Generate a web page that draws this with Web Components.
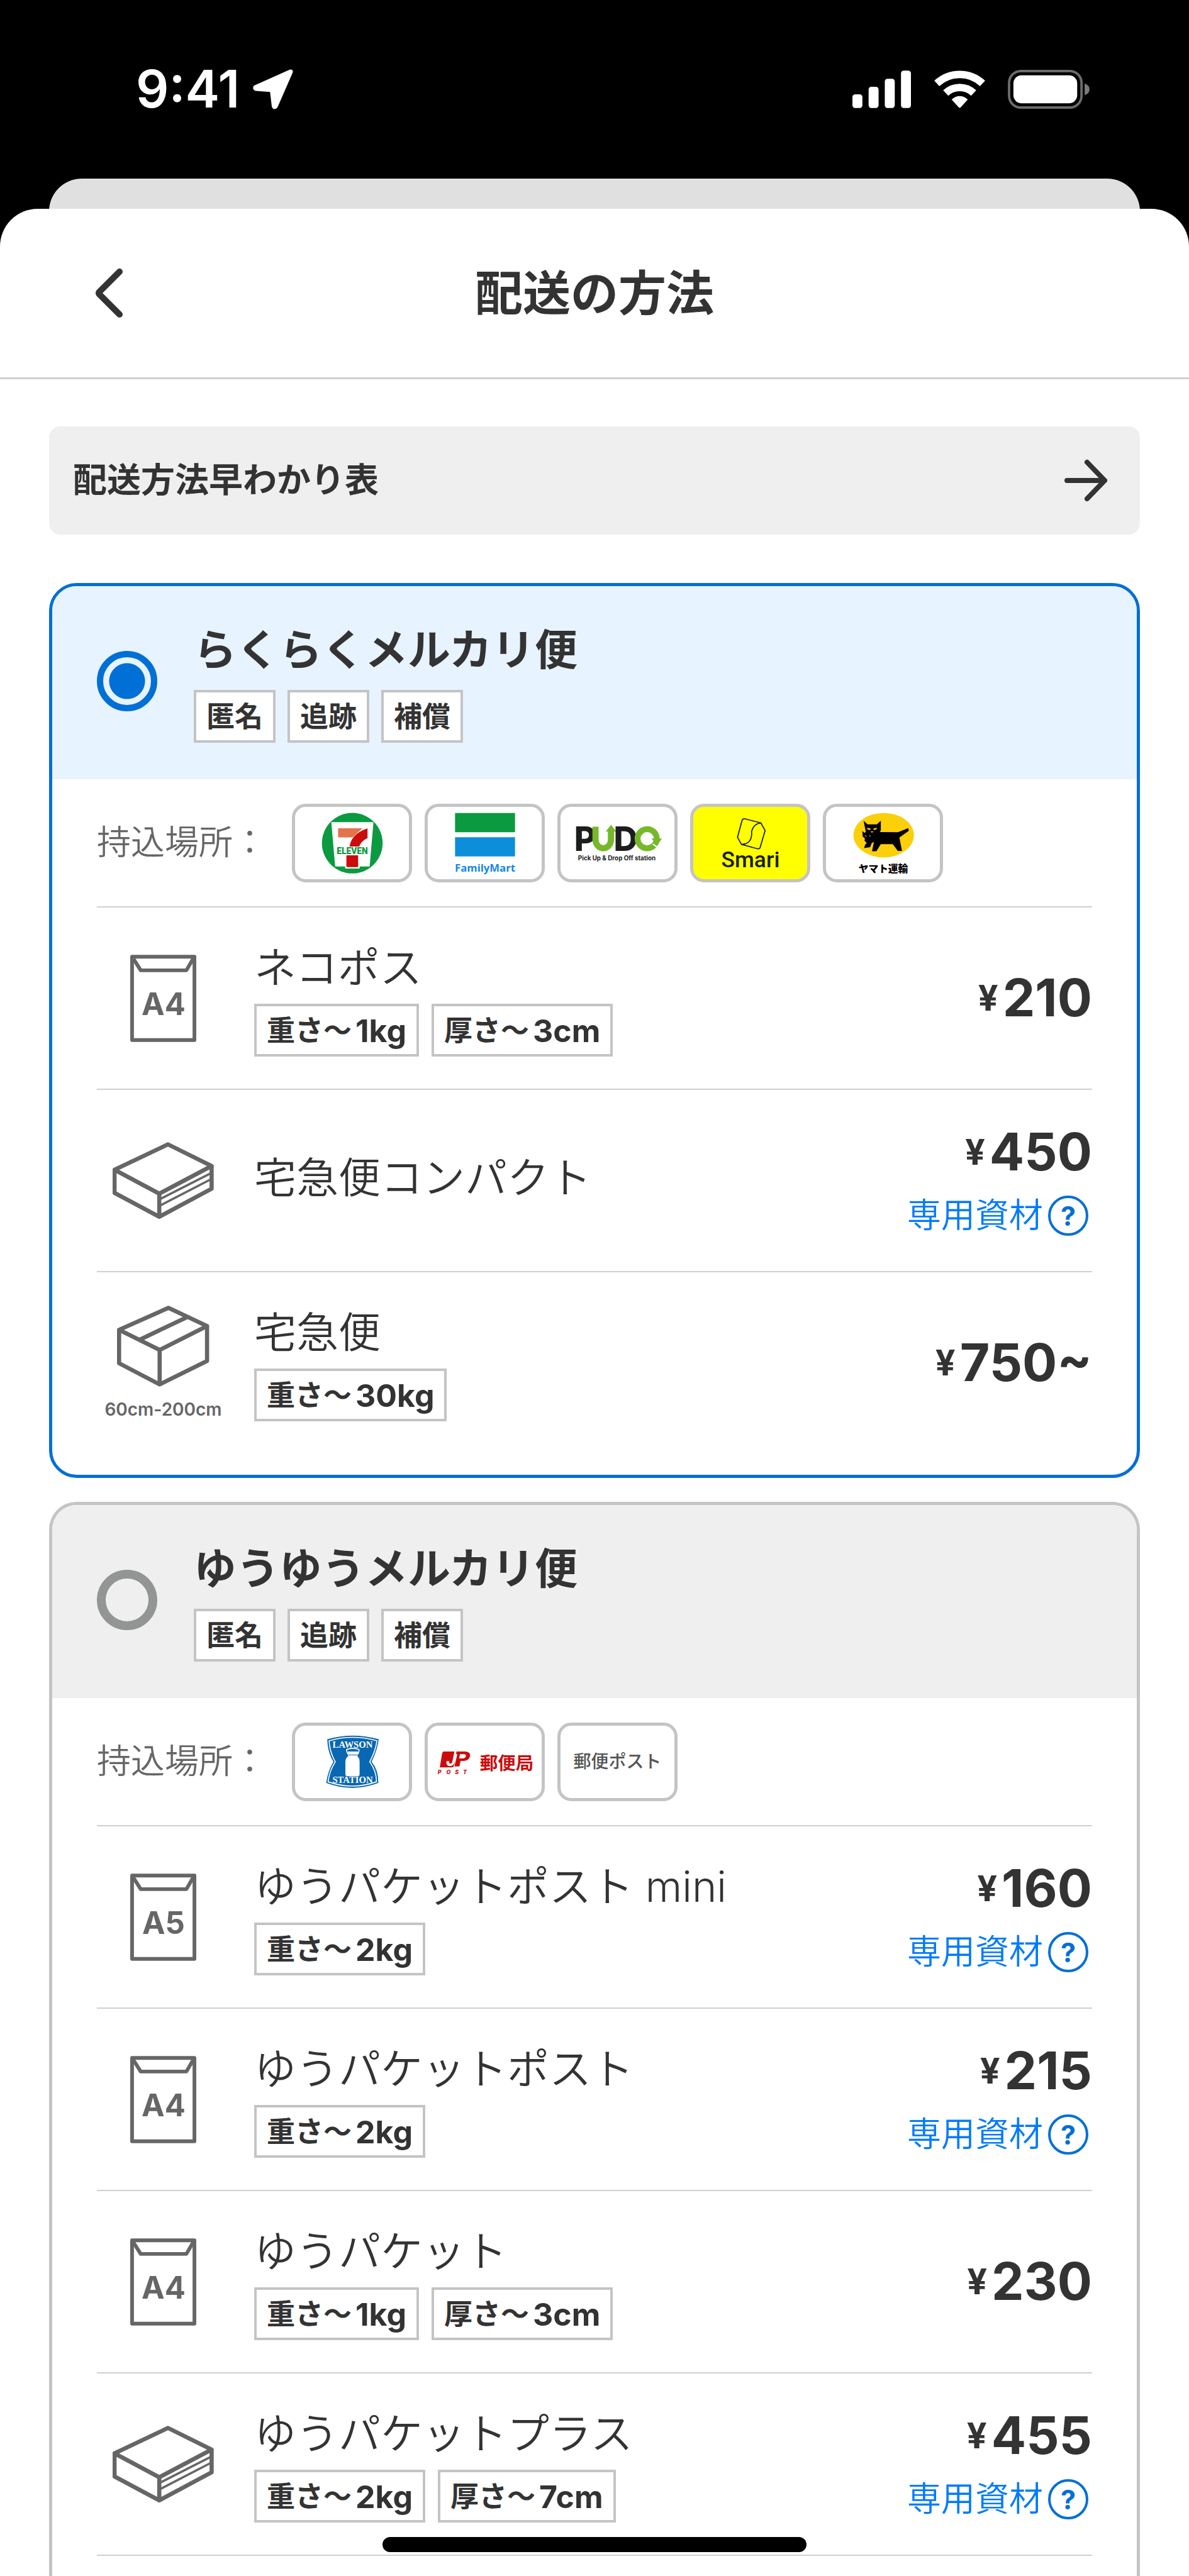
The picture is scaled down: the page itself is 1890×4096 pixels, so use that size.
<!DOCTYPE html>
<html lang="ja">
<head>
<meta charset="utf-8">
<meta name="viewport" content="width=device-width, initial-scale=1">
<title>配送の方法</title>
<style>
  html, body { margin: 0; }
  body {
    min-height: 100vh;
    display: flex;
    flex-direction: column;
    background: #000;
    color: #333;
    font-family: Inter, "Noto Sans CJK JP", sans-serif;
    --line: #c4c4c4;
    --blue: #006fd6;
  }
  shipping-sheet { flex: 1; }
</style>
</head>
<body>
<status-bar time="9:41"></status-bar>
<shipping-sheet heading="配送の方法">
  <guide-link>配送方法早わかり表</guide-link>

  <shipping-card heading="らくらくメルカリ便" selected>
    <tag-label slot="tags">匿名</tag-label>
    <tag-label slot="tags">追跡</tag-label>
    <tag-label slot="tags">補償</tag-label>
    <place-chip slot="places" logo="seven"></place-chip>
    <place-chip slot="places" logo="family"></place-chip>
    <place-chip slot="places" logo="pudo"></place-chip>
    <place-chip slot="places" logo="smari"></place-chip>
    <place-chip slot="places" logo="yamato"></place-chip>
    <shipping-option name="ネコポス" icon="envelope" size="A4" price="210">
      <tag-label>重さ〜<b>1kg</b></tag-label>
      <tag-label>厚さ〜<b>3cm</b></tag-label>
    </shipping-option>
    <shipping-option name="宅急便コンパクト" icon="flat" price="450" material></shipping-option>
    <shipping-option name="宅急便" icon="box" size="60cm-200cm" price="750~">
      <tag-label>重さ〜<b>30kg</b></tag-label>
    </shipping-option>
  </shipping-card>

  <shipping-card heading="ゆうゆうメルカリ便" continues>
    <tag-label slot="tags">匿名</tag-label>
    <tag-label slot="tags">追跡</tag-label>
    <tag-label slot="tags">補償</tag-label>
    <place-chip slot="places" logo="lawson"></place-chip>
    <place-chip slot="places" logo="post"></place-chip>
    <place-chip slot="places">郵便ポスト</place-chip>
    <shipping-option name="ゆうパケットポスト mini" icon="envelope" size="A5" price="160" material>
      <tag-label>重さ〜<b>2kg</b></tag-label>
    </shipping-option>
    <shipping-option name="ゆうパケットポスト" icon="envelope" size="A4" price="215" material>
      <tag-label>重さ〜<b>2kg</b></tag-label>
    </shipping-option>
    <shipping-option name="ゆうパケット" icon="envelope" size="A4" price="230">
      <tag-label>重さ〜<b>1kg</b></tag-label>
      <tag-label>厚さ〜<b>3cm</b></tag-label>
    </shipping-option>
    <shipping-option name="ゆうパケットプラス" icon="flat" price="455" material>
      <tag-label>重さ〜<b>2kg</b></tag-label>
      <tag-label>厚さ〜<b>7cm</b></tag-label>
    </shipping-option>
  </shipping-card>
</shipping-sheet>
<home-indicator></home-indicator>

<script>
class BaseElement extends HTMLElement {
  connectedCallback() {
    if (this.shadowRoot) return;
    this.attachShadow({ mode: 'open' }).innerHTML = this.render();
  }
  attr(name) { return this.getAttribute(name) || ''; }
}

customElements.define('status-bar', class extends BaseElement {
  render() {
    return `<style>
      :host { display: flex; align-items: center; justify-content: space-between; height: 284px; padding: 0 158px 0 216px; box-sizing: border-box; color: #fff; }
      .left, .right { display: flex; align-items: center; }
      .left { gap: 20px; } .right { gap: 36px; }
      time { font-size: 82px; line-height: 80px; font-weight: 600; }
      svg { display: block; }
    </style>
    <div class="left">
      <time>${this.attr('time')}</time>
      <svg width="66" height="66" viewBox="0 0 65 65" aria-hidden="true"><path d="M60 5 L5 29.500 Q4 31 6 31.500 L31 33.500 L34 59 Q35 61 36.500 59 Z" fill="#fff" stroke="#fff" stroke-width="7" stroke-linejoin="round"/></svg>
    </div>
    <div class="right">
      <svg width="94" height="60" viewBox="0 0 95 60" aria-hidden="true" fill="#fff"><rect y="38" width="16" height="22" rx="4.500"/><rect x="26" y="26" width="16" height="34" rx="4.500"/><rect x="52" y="13" width="16" height="47" rx="4.500"/><rect x="78" width="16" height="60" rx="4.500"/></svg>
      <svg width="81" height="60" viewBox="0 0 82 60" aria-hidden="true" fill="none" stroke="#fff" stroke-width="12"><path d="M4.200 20.500 A54 54 0 0 1 77.800 20.500"/><path d="M18.500 35.900 A33 33 0 0 1 63.500 35.900"/><path d="M28 46.500 Q41 35.500 54 46.500 L42.500 59 Q41 60.500 39.500 59 Z" fill="#fff" stroke="none"/></svg>
      <svg width="130" height="62" viewBox="0 0 132 63" aria-hidden="true"><rect x="2" y="2" width="117" height="59" rx="19" fill="none" stroke="#6b6b6b" stroke-width="4"/><rect x="9" y="9" width="103" height="45" rx="13" fill="#fff"/><path d="M124 22 Q132 25 132 31.500 Q132 38 124 41 Z" fill="#7a7a7a"/></svg>
    </div>`;
  }
});

customElements.define('shipping-sheet', class extends BaseElement {
  render() {
    return `<style>
      :host { display: flex; flex-direction: column; }
      .behind { height: 80px; margin: 0 78px -32px; border-radius: 52px 52px 0 0; background: #e0e0e0; }
      .sheet { flex: 1; display: flex; flex-direction: column; background: #fff; border-radius: 60px 60px 0 0; }
      header { display: grid; grid-template-columns: 1fr auto 1fr; align-items: center; height: 268px; padding: 0 148px; border-bottom: 3px solid #d0d0d0; }
      h1 { margin: 0; font-size: 76px; line-height: 90px; font-weight: 700; }
      button { justify-self: start; display: block; padding: 0; border: 0; background: none; color: inherit; }
      svg { display: block; }
      main { flex: 1; display: flex; flex-direction: column; padding: 75px 78px 0; }
      ::slotted(shipping-card) { margin-top: 38px; }
      ::slotted(guide-link) { margin-bottom: 39px; }
      ::slotted(shipping-card[continues]) { flex: 1; }
    </style>
    <div class="behind"></div>
    <div class="sheet">
      <header>
        <button type="button" aria-label="戻る"><svg width="52" height="86" viewBox="0 0 52 86"><path d="M42 9 L9.500 41.500 Q8.500 43 9.500 44.500 L42 77" fill="none" stroke="#333" stroke-width="10" stroke-linecap="round" stroke-linejoin="round"/></svg></button>
        <h1>${this.attr('heading')}</h1>
      </header>
      <main><slot></slot></main>
    </div>`;
  }
});

customElements.define('guide-link', class extends BaseElement {
  render() {
    return `<style>
      :host { display: block; }
      a { display: flex; align-items: center; justify-content: space-between; height: 172px; padding: 0 50px 0 38px; border-radius: 18px; background: #efefef; color: #333; text-decoration: none; font-size: 54px; line-height: 64px; font-weight: 700; }
      svg { display: block; }
    </style>
    <a href="#guide"><span><slot></slot></span>
      <svg width="72" height="72" viewBox="0 0 72 72" aria-hidden="true"><path d="M6 36 H66 M38 7 L66 36 L38 65" fill="none" stroke="#333" stroke-width="8" stroke-linecap="round" stroke-linejoin="round"/></svg>
    </a>`;
  }
});

customElements.define('tag-label', class extends BaseElement {
  render() {
    return `<style>
      :host { display: flex; align-items: center; gap: 6px; height: 84px; box-sizing: border-box; padding: 2px 16px 0; border: 4px solid var(--line); background: #fff; font-size: 45px; line-height: 54px; font-weight: 700; white-space: nowrap; }
      ::slotted(b) { font-size: 50px; font-weight: 700; }
    </style><slot></slot>`;
  }
});

customElements.define('shipping-card', class extends BaseElement {
  render() {
    return `<style>
      :host { display: flex; flex-direction: column; overflow: hidden; box-sizing: border-box; border: 5px solid var(--line); border-radius: 44px; --head: #efefef; }
      :host([selected]) { border-color: var(--blue); --head: #e7f3ff; }
      :host([continues]) { border-bottom: 0; border-radius: 44px 44px 0 0; }
      header { display: flex; align-items: center; gap: 58px; padding: 58px 71px; background: var(--head); }
      input { appearance: none; flex: none; width: 96px; height: 96px; margin: 0 0 5px; border: 14px solid #929594; border-radius: 50%; }
      input:checked { border: 10px solid var(--blue); background: radial-gradient(circle, var(--blue) 28px, transparent 29px); }
      .title { padding-top: 5px; }
      label { display: block; font-size: 68px; line-height: 76px; font-weight: 700; }
      .tags { display: flex; gap: 19px; margin-top: 26px; }
      .places { display: flex; align-items: center; height: 202px; padding: 0 71px; }
      .caption { margin: 0 40px 0 0; font-size: 54px; line-height: 64px; font-weight: 350; color: #666; }
      .chips { display: flex; gap: 20px; }
      .options { padding: 0 71px 34px; }
      :host([continues]) .options { padding-bottom: 0; }
      .end { height: 2px; background: #d0d0d0; }
    </style>
    <header>
      <input type="radio" id="choice" name="shipping"${this.hasAttribute('selected') ? ' checked' : ''}>
      <div class="title">
        <label for="choice">${this.attr('heading')}</label>
        <div class="tags"><slot name="tags"></slot></div>
      </div>
    </header>
    <div class="places"><p class="caption">持込場所：</p><div class="chips"><slot name="places"></slot></div></div>
    <div class="options"><slot></slot>${this.hasAttribute('continues') ? '<div class="end"></div>' : ''}</div>`;
  }
});

const LOGOS = {
  seven: `<g transform="scale(.3444 .3333) translate(-46 -37)">
      <ellipse cx="314.500" cy="213" rx="142.500" ry="147" fill="#0b9a40"/>
      <path d="M216 111 H414 L396 326 H234 Z" fill="#fff"/>
      <path d="M248 141 H362 L316 185 H248 Z" fill="#e2744a"/>
      <path d="M386 141 V188 Q352 204 345 236 H301 Q306 170 386 141 Z" fill="#cc0c0c"/>
      <path d="M281 272 H349 V336 H281 Z" fill="#fff"/><path d="M287 272 H342 V329 H287 Z" fill="#cc0c0c"/>
      <path d="M240 229 H390 V271 H240 Z" fill="#fff"/></g>
    <text x="92.500" y="76.500" text-anchor="middle" font-family="Roboto" font-weight="900" font-size="14" fill="#0b9a40">ELEVEN</text>`,
  family: `<path d="M44 10 H141 V41 H44 Z" fill="#0b9a40"/><path d="M44 49 H141 V80 H44 Z" fill="#0d8edb"/>
    <text x="92.500" y="105" text-anchor="middle" font-family="Open Sans" font-weight="700" font-size="17" fill="#1587e8">FamilyMart</text>`,
  pudo: `<g font-family="Inter" font-weight="800" font-size="54">
      <text x="22" y="71" fill="#1c1e1d">P</text><path d="M56.500 32 V53 A12.500 14 0 0 0 81.500 53 V38" fill="none" stroke="#77b82a" stroke-width="10"/><path d="M73 40 L81.500 29 L90 40 Z" fill="#77b82a"/>
      <text x="86" y="71" fill="#1c1e1d">D</text></g>
    <ellipse cx="140" cy="51.500" rx="15.500" ry="15.500" fill="none" stroke="#77b82a" stroke-width="9.500"/>
    <path d="M147 51 H164 L156.500 62 Z" fill="#77b82a"/><path d="M149 60 L156 65 L164 55" fill="none" stroke="#fff" stroke-width="2"/>
    <text x="91" y="86" text-anchor="middle" font-family="Inter" font-weight="700" font-size="10" fill="#222">Pick Up &amp; Drop Off station</text>`,
  smari: `<g transform="scale(.3571 .3333) translate(-366 -37)" fill="none" stroke="#16201c" stroke-width="5" stroke-linejoin="round">
      <path d="M600 95 L672 115 L691 152 L668 236 Q664 242 656 240 L584 219 L566 185 L587 101 Q591 93 600 95 Z"/>
      <path d="M672 115 Q640 118 630 156 Q634 218 584 219"/></g>
    <text x="92.500" y="98" text-anchor="middle" font-family="Roboto" font-weight="500" font-size="36" fill="#16201c">Smari</text>`,
  yamato: `<g transform="scale(.3571 .3333) translate(-966 -37)">
      <ellipse cx="1227" cy="174.500" rx="137" ry="108" fill="#fccf0b"/>
      <path d="M1136 104 L1154 122 H1196 L1214 104 V150 L1210 159 L1292 160 L1338 140 L1341 153 L1298 186 L1310 251 H1291 L1268 218 H1214 L1194 252 H1174 L1183 206 L1172 214 L1166 232 L1138 237 L1143 220 L1150 213 L1140 200 L1142 190 L1132 181 L1130 154 L1140 163 L1146 158 Z" fill="#000"/>
      <path d="M1150 138 L1168 142 L1166 149 L1156 148 Z M1198 138 L1180 142 L1182 149 L1192 148 Z M1140 174 L1150 178 L1147 182 Z M1170 174 L1160 178 L1163 182 Z M1166 156 H1182 L1174 162 Z" fill="#fccf0b"/></g>
    <text x="92.500" y="106" text-anchor="middle" font-family="Noto Sans CJK JP" font-weight="900" font-size="16" fill="#000">ヤマト運輸</text>`,
  lawson: `<g transform="scale(.3333) translate(-32 -38)">
      <path d="M188 104 Q312 68 438 104 Q430 160 403 213 Q436 250 436 316 Q310 364 183 316 Q190 260 218 213 Q190 170 188 104 Z" fill="#0a67b2"/>
      <path d="M197 111 Q312 78 429 111 Q422 162 394 213 Q426 256 427 310 Q310 352 192 310 Q198 258 227 213 Q200 168 197 111 Z" fill="none" stroke="#fff" stroke-width="5"/>
      <path d="M288 163 H337 V176 Q337 184 334 186 Q345 194 345 212 V274 Q345 283 335 283 H286 Q276 283 276 274 V212 Q276 194 290 186 Q288 184 288 176 Z" fill="#fff"/>
      <path d="M288 176 Q278 152 284 153 Q312 142 341 153 Q345 156 337 176" fill="none" stroke="#fff" stroke-width="5"/>
      <path d="M290 180 H336" stroke="#0a67b2" stroke-width="3"/></g>
    <g font-family="Liberation Serif" font-weight="700" font-size="15" fill="#fff" text-anchor="middle"><text x="93" y="36">LAWSON</text><text x="93" y="93">STATION</text></g>`,
  post: `<g transform="scale(.3333) translate(-677 -38)">
      <path d="M756 163 H806 L796 212 Q794 222 786 222 Q778 222 780 210 H768 Q764 234 784 234 Q802 234 807 216 L809 212 L804 232 Q802 240 794 240 H735 L746 174 Q748 163 756 163 Z" fill="#cc0c0c"/>
      <path d="M816 163 H858 Q882 164 882 182 Q880 207 850 209 H836 L830 236 H806 L820 176 H833 L829 197 H846 Q860 196 862 184 Q862 176 852 176 H814 Z" fill="#cc0c0c"/></g>
    <g font-family="Inter" font-weight="800" font-style="italic" font-size="9" fill="#cc0c0c"><text x="16" y="78">P</text><text x="30" y="78">O</text><text x="44" y="78">S</text><text x="57" y="78">T</text></g>
    <text x="84" y="71" font-family="Noto Sans CJK JP" font-weight="700" font-size="29" fill="#cc0c0c">郵便局</text>`
};

customElements.define('place-chip', class extends BaseElement {
  render() {
    const logo = LOGOS[this.attr('logo')];
    return `<style>
      :host { display: flex; align-items: center; justify-content: center; width: 191px; height: 125px; box-sizing: border-box; overflow: hidden; border: 5px solid var(--line); border-radius: 22px; font-size: 28px; line-height: 34px; font-weight: 500; color: #555; }
      :host([logo=smari]) { background: #ff0; }
      svg { display: block; flex: none; }
    </style>${logo ? `<svg width="182" height="115" viewBox="0 0 185 117">${logo}</svg>` : '<slot></slot>'}`;
  }
});

customElements.define('pack-icon', class extends BaseElement {
  render() {
    const size = this.attr('size');
    const art = {
      envelope: `<svg width="105" height="139" viewBox="0 0 107 141"><g fill="none" stroke="#666" stroke-width="6" stroke-linejoin="round"><path d="M3 3 H104 V138 H3 Z"/><path d="M5 6 L17 25 H91 L102 6"/></g><text x="54" y="98" text-anchor="middle" font-weight="700" font-size="50" fill="#666">${size}</text></svg>`,
      flat: `<svg width="161" height="123" viewBox="198 627 267 204"><g fill="none" stroke="#666" stroke-width="11" stroke-linejoin="round"><path d="M344 633 L459 690 L321 763 L203 700 Z"/><path d="M203 700 V761 L321 824 L459 750 V690 M321 763 V824"/><path d="M324 777 L459 708 M324 794 L459 724" stroke-width="6"/></g></svg>`,
      box: `<svg width="147" height="129" viewBox="213 1067 243 214"><g fill="none" stroke="#666" stroke-width="11" stroke-linejoin="round"><path d="M348 1073 L450 1121 L325 1184 L218 1131 Z"/><path d="M218 1131 V1219 L325 1275 L450 1213 V1121 M325 1184 V1275 M396 1098 L274 1156"/></g></svg><span>${size}</span>`
    }[this.attr('kind')];
    return `<style>
      :host { display: flex; flex-direction: column; align-items: center; gap: 18px; }
      svg { display: block; }
      span { font-size: 28px; line-height: 36px; font-weight: 600; color: #666; white-space: nowrap; }
    </style>${art}`;
  }
});

customElements.define('shipping-option', class extends BaseElement {
  render() {
    const tagged = this.querySelector('tag-label');
    return `<style>
      :host { display: flex; align-items: center; height: 290px; box-sizing: border-box; border-top: 2px solid #d0d0d0; }
      pack-icon { flex: none; width: 211px; margin-right: 39px; }
      .text { flex: 1; padding-bottom: 8px; }
      .text.tagged { padding: 6px 0 0; }
      h2 { margin: 0; font-size: 67px; line-height: 76px; font-weight: 350; white-space: nowrap; }
      .tags { display: flex; gap: 20px; margin-top: 19px; }
      .cost { display: flex; flex-direction: column; align-items: flex-end; gap: 26px; }
      .price { display: flex; align-items: center; gap: 7px; font-size: 82px; line-height: 86px; font-weight: 700; }
      small { font-size: 56px; }
      a { display: flex; align-items: center; gap: 8px; margin-right: 6px; color: #007aff; font-size: 54px; line-height: 64px; font-weight: 350; text-decoration: none; }
      svg { display: block; }
    </style>
    <pack-icon kind="${this.attr('icon')}" size="${this.attr('size')}"></pack-icon>
    <div class="text${tagged ? ' tagged' : ''}"><h2>${this.attr('name')}</h2>${tagged ? '<div class="tags"><slot></slot></div>' : ''}</div>
    <div class="cost">
      <div class="price"><small>¥</small><span>${this.attr('price')}</span></div>
      ${this.hasAttribute('material') ? `<a href="#material"><span>専用資材</span><svg width="64" height="64" viewBox="0 0 64 64"><circle cx="32" cy="32" r="30" fill="none" stroke="#006fd6" stroke-width="4"/><text x="32" y="48" text-anchor="middle" font-weight="700" font-size="43" fill="#006fd6">?</text></svg></a>` : ''}
    </div>`;
  }
});

customElements.define('home-indicator', class extends BaseElement {
  render() {
    return `<style>
      :host { display: flex; justify-content: center; position: fixed; left: 0; right: 0; bottom: 38px; pointer-events: none; }
      div { width: 674px; height: 24px; border-radius: 12px; background: #000; }
    </style><div></div>`;
  }
});
</script>
</body>
</html>
